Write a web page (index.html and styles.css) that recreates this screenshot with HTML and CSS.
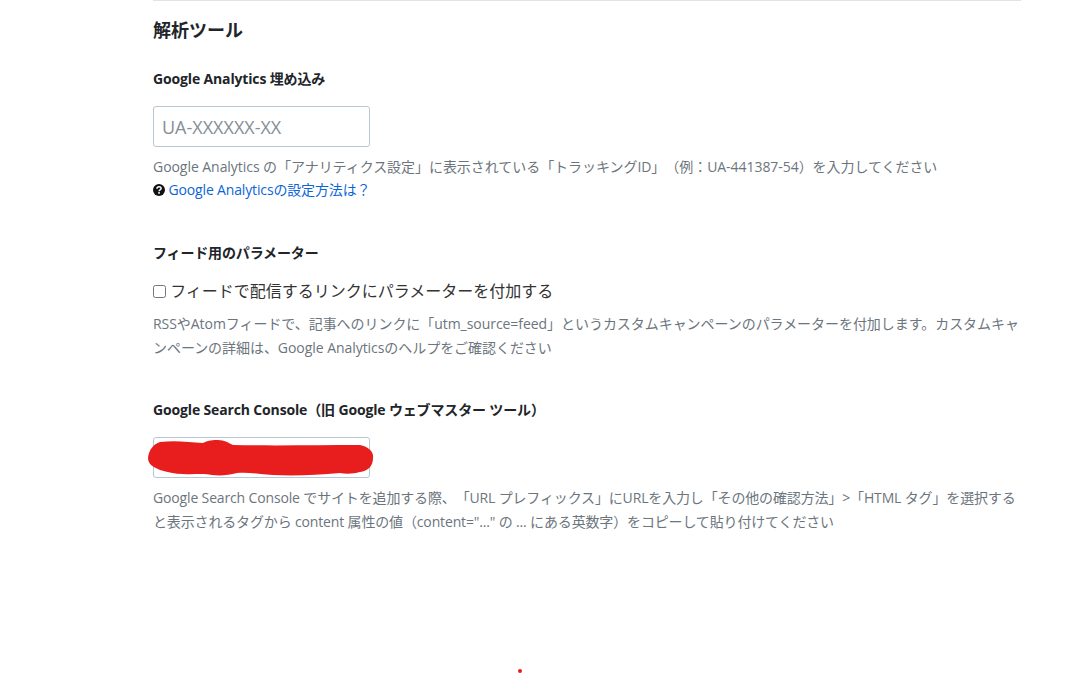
FILE: index.html
```html
<!DOCTYPE html>
<html lang="ja">
<head>
<meta charset="utf-8">
<title>解析ツール</title>
<link rel="stylesheet" href="styles.css">
</head>
<body>
<main class="page">
  <hr class="rule">
  <h2 class="title">解析ツール</h2>

  <section class="field field-ga">
    <label class="label">Google Analytics 埋め込み</label>
    <input class="input" type="text" placeholder="UA-XXXXXX-XX">
    <p class="help">Google Analytics の「アナリティクス設定」に表示されている「トラッキングID」（例：UA-441387-54）を入力してください</p>
    <p class="help help-link"><svg class="q-icon" viewBox="0 0 12 12" aria-hidden="true"><circle cx="6" cy="6" r="6" fill="#111"/><path d="M4 4.7c0-1.2.9-2 2.1-2s2 .8 2 1.8c0 1.4-2 1.5-2 2.7" fill="none" stroke="#fff" stroke-width="1.5"/><rect x="5.2" y="8.1" width="1.7" height="1.6" fill="#fff"/></svg> <a class="link" href="#">Google Analyticsの設定方法は？</a></p>
  </section>

  <section class="field field-feed">
    <label class="label label-feed">フィード用のパラメーター</label>
    <label class="check"><input class="box" type="checkbox"> フィードで配信するリンクにパラメーターを付加する</label>
    <p class="help">RSSやAtomフィードで、記事へのリンクに「utm_source=feed」というカスタムキャンペーンのパラメーターを付加します。カスタムキャンペーンの詳細は、Google Analyticsのヘルプをご確認ください</p>
  </section>

  <section class="field field-gsc">
    <label class="label">Google Search Console（旧 Google ウェブマスター ツール）</label>
    <div class="masked">
      <input class="input" type="text">
      <svg class="scribble" viewBox="0 0 228 38" aria-hidden="true"><path d="M1 19C2 10 7 5 13 3C28 1 42 3 56 4C62 1 66 1 71 1C77 1 82 4 86 6C130 7 170 6 213 6C222 8 227 13 226 19C226 27 221 32 213 33C206 35 199 35 193 34C170 36 148 37 126 36C113 35 101 33 90 34C82 36 74 37 65 36C55 34 46 36 36 35C28 35 20 33 13 31C6 28 1 25 1 19Z" fill="#e81e1e"/></svg>
    </div>
    <p class="help help-gsc">Google Search Console でサイトを追加する際、「URL プレフィックス」にURLを入力し「その他の確認方法」&gt;「HTML タグ」を選択すると表示されるタグから content 属性の値（content="..." の ... にある英数字）をコピーして貼り付けてください</p>
  </section>
</main>
<span class="dot"></span>
</body>
</html>
```
FILE: styles.css
```css
html, body {
  margin: 0;
  padding: 0;
  height: 100%;
  overflow: hidden;
  background: #fff;
}
body {
  font-family: "Open Sans", "Noto Sans CJK JP", sans-serif;
  color: #212529;
  font-size: 16px;
  text-spacing-trim: space-all;
}
.page {
  width: 868px;
  margin-left: 153px;
}
.rule {
  margin: 0;
  border: 0;
  border-top: 1px solid #e3e3e3;
}
.title {
  margin: 16px 0 0;
  font-size: 18px;
  line-height: 27px;
  font-weight: 700;
}
.field { display: block; }
.field-ga { margin-top: 25px; }
.field-feed { margin-top: 41px; }
.field-gsc { margin-top: 40px; }
.label {
  display: block;
  font-size: 14px;
  letter-spacing: -0.15px;
  line-height: 20px;
  font-weight: 700;
  margin-bottom: 17px;
}
.label-feed { margin-bottom: 16px; }
.input {
  display: block;
  box-sizing: border-box;
  width: 217px;
  height: 41px;
  padding: 0 8px;
  border: 1px solid #b8c7d3;
  border-radius: 3px;
  font: 18px "Open Sans", sans-serif;
  background: #fff;
}
.input::placeholder { color: #868e96; opacity: 1; }
.help {
  margin: 0;
  font-size: 14px;
  letter-spacing: -0.05px;
  line-height: 24px;
  color: #6c757d;
}
.help-link { margin-top: -1px; letter-spacing: -0.15px; }
.help-gsc { letter-spacing: -0.15px; }
.input + .help, .masked + .help { margin-top: 8px; }
.link { color: #0b65d8; text-decoration: none; }
.q-icon {
  width: 12px;
  height: 12px;
  vertical-align: -1px;
}
.check {
  display: block;
  font-size: 16px;
  line-height: 24px;
  color: #333;
  margin-bottom: 9px;
}
.box {
  width: 13px;
  height: 13px;
  margin: 0;
  vertical-align: -1px;
}
.masked {
  position: relative;
  width: 217px;
}
.scribble {
  position: absolute;
  left: -6px;
  top: 2px;
  width: 228px;
  height: 38px;
}
.dot {
  position: absolute;
  left: 517.5px;
  top: 668.5px;
  width: 4px;
  height: 4px;
  border-radius: 50%;
  background: #e81e1e;
}
```
